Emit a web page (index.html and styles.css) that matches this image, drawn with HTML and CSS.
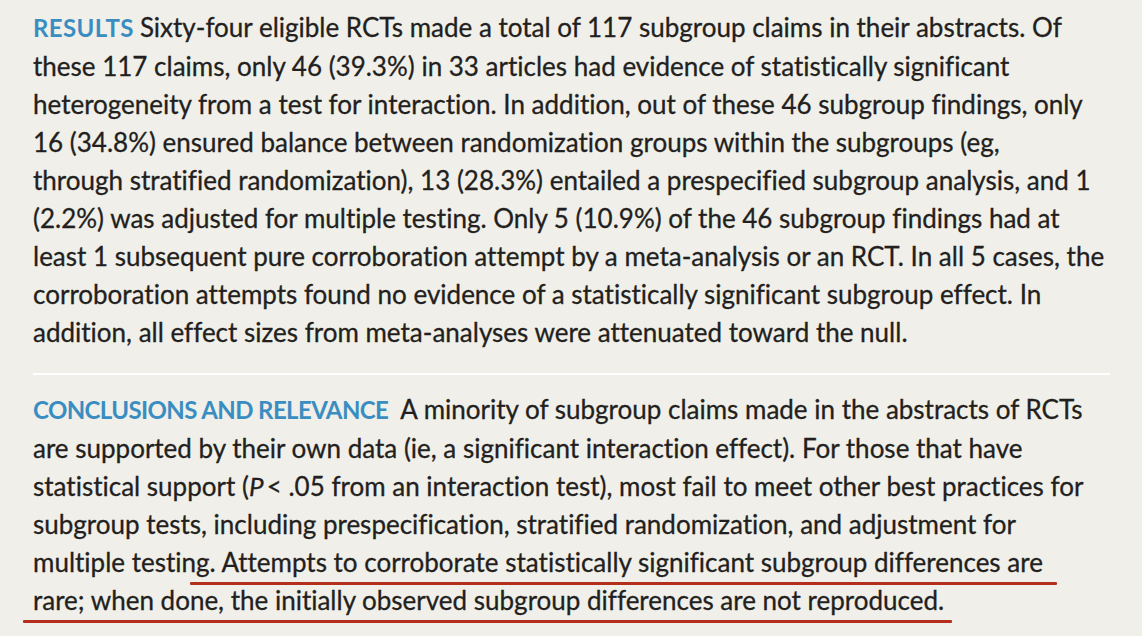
FILE: index.html
```html
<!DOCTYPE html>
<html lang="en">
<head>
<meta charset="utf-8">
<link rel="stylesheet" href="styles.css">
<title>Abstract</title>
</head>
<body>
<main class="abstract">
  <p class="section"><span class="label label-results">RESULTS</span>Sixty-four eligible RCTs made a total of 117 subgroup claims in their abstracts. Of<br>these 117 claims, only 46 (39.3%) in 33 articles had evidence of statistically significant<br>heterogeneity from a test for interaction. In addition, out of these 46 subgroup findings, only<br>16 (34.8%) ensured balance between randomization groups within the subgroups (eg,<br>through stratified randomization), 13 (28.3%) entailed a prespecified subgroup analysis, and 1<br>(2.2%) was adjusted for multiple testing. Only 5 (10.9%) of the 46 subgroup findings had at<br>least 1 subsequent pure corroboration attempt by a meta-analysis or an RCT. In all 5 cases, the<br>corroboration attempts found no evidence of a statistically significant subgroup effect. In<br>addition, all effect sizes from meta-analyses were attenuated toward the null.</p>
  <hr class="divider">
  <div class="annotated">
    <p class="section"><span class="label label-conclusions">CONCLUSIONS AND RELEVANCE</span>A minority of subgroup claims made in the abstracts of RCTs<br>are supported by their own data (ie, a significant interaction effect). For those that have<br>statistical support (<i>P</i>&thinsp;&lt; .05 from an interaction test), most fail to meet other best practices for<br>subgroup tests, including prespecification, stratified randomization, and adjustment for<br>multiple testing. Attempts to corroborate statistically significant subgroup differences are<br>rare; when done, the initially observed subgroup differences are not reproduced.</p>
    <span class="mark mark-1"></span>
    <span class="mark mark-2"></span>
  </div>
</main>
</body>
</html>
```
FILE: styles.css
```css
html, body {
  margin: 0;
  padding: 0;
  background: #f0efe9;
}
body {
  width: 1142px;
  height: 636px;
  overflow: hidden;
}
.abstract {
  padding: 8px 32px 0 33px;
  font-family: "Lato", "Liberation Sans", sans-serif;
  font-size: 26px;
  line-height: 38px;
  color: #231f20;
  font-variant-ligatures: none;
  -webkit-text-stroke: 0.3px #231f20;
}
.section {
  margin: 0;
  white-space: nowrap;
}
.label {
  font-size: 24px;
  font-weight: 700;
  color: #3a8dc1;
  -webkit-text-stroke: 0;
  margin-right: 6px;
}
.label-results {
  letter-spacing: 0.4px;
}
.label-conclusions {
  letter-spacing: -0.6px;
  margin-right: 12px;
}
.divider {
  border: 0;
  height: 2px;
  background: #ffffff;
  margin: 22px 0 15px 0;
  width: 1077px;
}
.annotated {
  position: relative;
}
.mark {
  position: absolute;
  height: 3px;
  background: #b32e1d;
  border-radius: 1px;
}
.mark-1 {
  left: 157px;
  width: 867px;
  top: 192px;
}
.mark-2 {
  left: -10px;
  width: 929px;
  top: 230px;
}
```
